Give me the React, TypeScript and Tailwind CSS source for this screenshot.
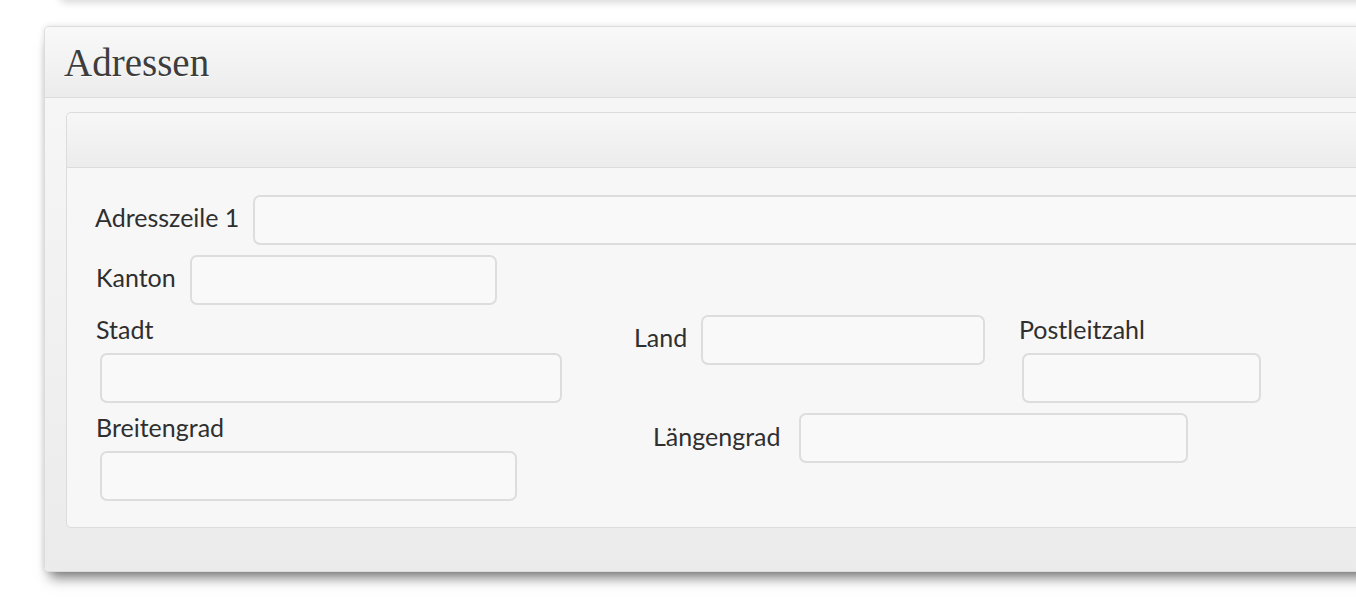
import React from 'react';

const inputCls =
  'h-[50px] rounded-[7px] border-2 border-[#dddddd] bg-[#f9f9f9] outline-none shrink-0';

function Label({ children, className = '' }: { children: React.ReactNode; className?: string }) {
  return <label className={`text-[25px] leading-[28px] text-[#2f2f2f] whitespace-nowrap ${className}`}>{children}</label>;
}

export default function App() {
  return (
    <div className="min-h-screen w-full overflow-hidden bg-white font-['Lato',sans-serif]">
      {/* bottom edge of the panel above */}
      <div className="-mt-[10px] ml-[60px] h-[10px] w-[1400px] rounded-bl-md bg-white shadow-[0_2px_8px_rgba(0,0,0,0.18)]" />

      <div className="ml-[44px] mt-[26px] flex">
        <div className="w-[1340px] shrink-0 rounded-l-[5px] border border-[#dcdcdc] shadow-[0_12px_12px_-6px_rgba(0,0,0,0.5),0_0_6px_rgba(0,0,0,0.12)]">
          {/* header */}
          <div className="flex h-[71px] items-center rounded-tl-[5px] border-b border-[#dcdcdc] bg-gradient-to-b from-[#f9f9f9] to-[#ececec] pl-[19px]">
            <h2 className="font-['Liberation_Serif',serif] text-[39px] leading-none text-[#3d3d3d] [text-shadow:0_1px_0_#fff]">
              Adressen
            </h2>
          </div>

          {/* body */}
          <div className="rounded-bl-[5px] bg-gradient-to-b from-[#f6f6f6] to-[#ebebeb] pb-[43px] pl-[21px] pt-[14px]">
            <div className="rounded-l-[5px] border border-[#dcdcdc] bg-[#f7f7f7]">
              <div className="h-[55px] rounded-tl-[5px] border-b border-[#dcdcdc] bg-gradient-to-b from-[#f7f7f7] to-[#ececec]" />

              <form className="pb-[26px] pl-[28px] pt-[27px]">
                <div className="flex items-center">
                  <Label className="mb-[6px]">Adresszeile 1</Label>
                  <input className={`${inputCls} ml-[14px] flex-1`} />
                </div>

                <div className="mt-[10px] flex items-center">
                  <Label className="mb-[6px] ml-[1px]">Kanton</Label>
                  <input className={`${inputCls} ml-[14px] w-[307px]`} />
                </div>

                <div className="mt-[10px] flex items-start">
                  <div className="flex w-[466px] flex-col pl-[1px]">
                    <Label>Stadt</Label>
                    <input className={`${inputCls} ml-[4px] mt-[10px] w-[462px]`} />
                  </div>
                  <div className="ml-[73px] flex w-[351px] items-center">
                    <Label className="mb-[6px] w-[68px]">Land</Label>
                    <input className={`${inputCls} w-[284px]`} />
                  </div>
                  <div className="ml-[34px] flex flex-col">
                    <Label>Postleitzahl</Label>
                    <input className={`${inputCls} ml-[3px] mt-[10px] w-[239px]`} />
                  </div>
                </div>

                <div className="mt-[10px] flex items-start">
                  <div className="flex w-[421px] flex-col pl-[1px]">
                    <Label>Breitengrad</Label>
                    <input className={`${inputCls} ml-[4px] mt-[10px] w-[417px]`} />
                  </div>
                  <div className="ml-[137px] flex items-center">
                    <Label className="mb-[5px] w-[146px]">Längengrad</Label>
                    <input className={`${inputCls} w-[389px]`} />
                  </div>
                </div>
              </form>
            </div>
          </div>
        </div>
      </div>
    </div>
  );
}
